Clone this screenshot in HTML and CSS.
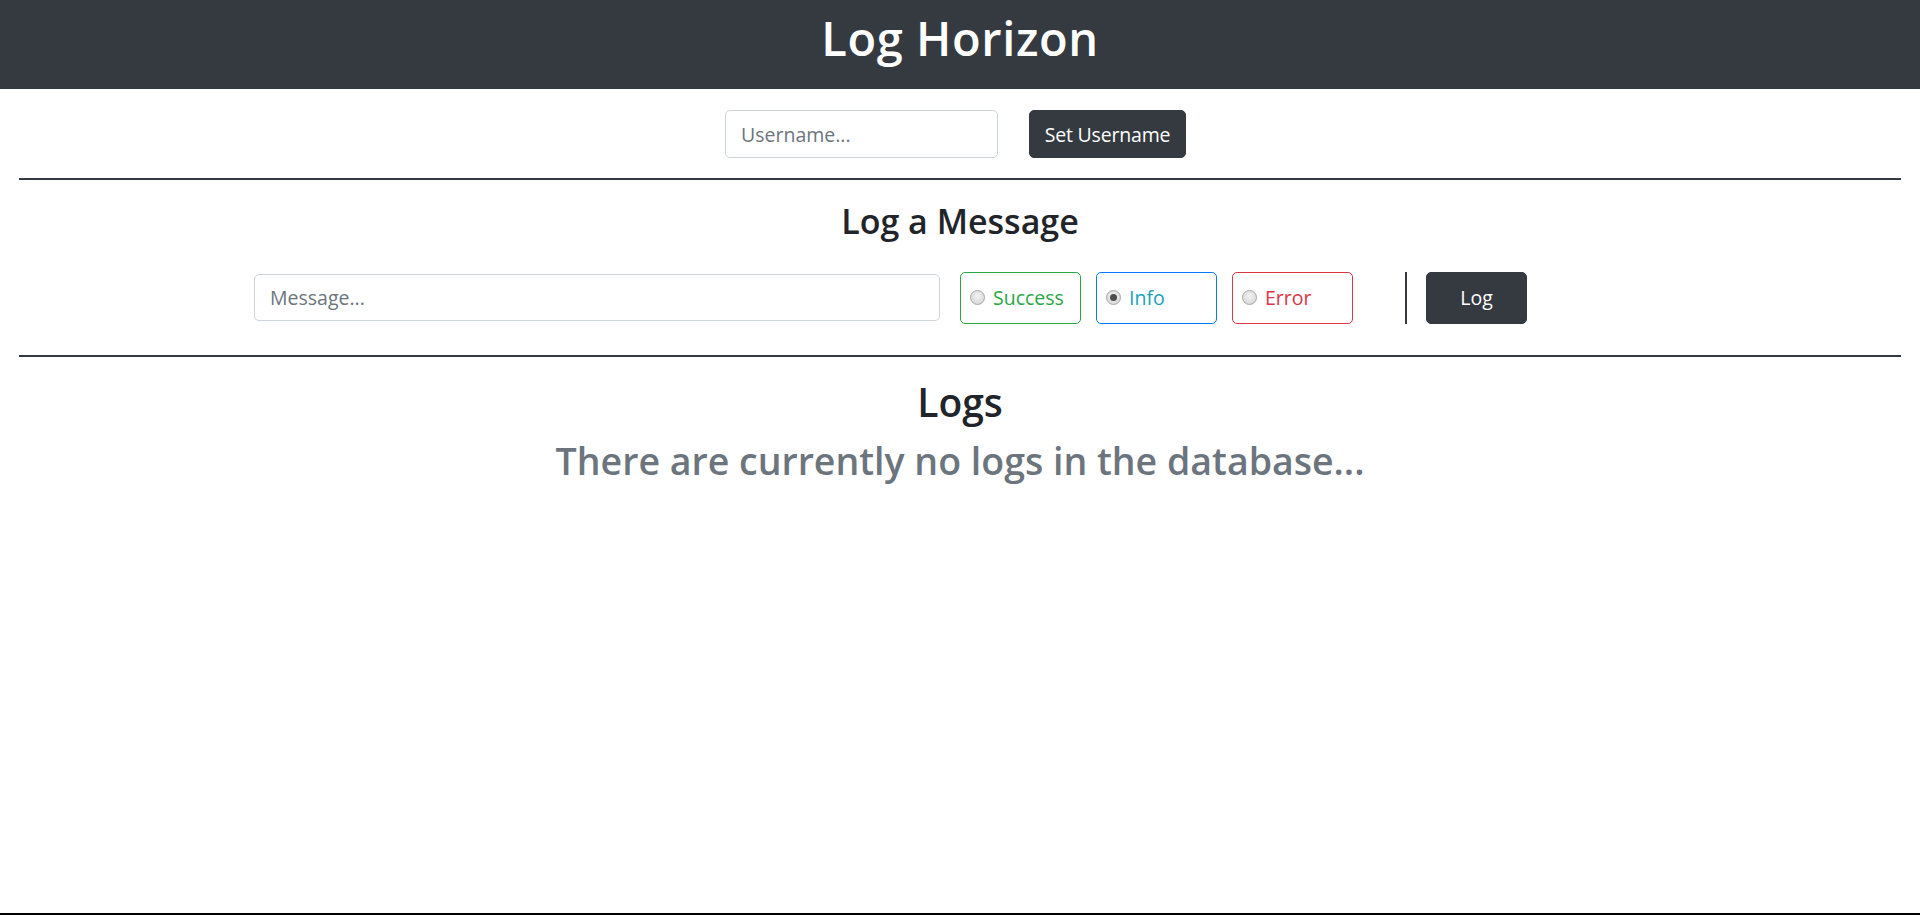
FILE: index.html
```html
<!DOCTYPE html>
<html lang="en">
<head>
<meta charset="utf-8">
<title>Log Horizon</title>
<link rel="stylesheet" href="styles.css">
</head>
<body>
<div class="page">
  <header class="topbar">
    <h1 class="brand">Log Horizon</h1>
  </header>

  <div class="user-row">
    <input class="field field-user" type="text" placeholder="Username...">
    <button class="btn btn-user" type="button">Set Username</button>
  </div>

  <hr class="rule">

  <section class="composer">
    <h3 class="section-title">Log a Message</h3>
    <div class="msg-row">
      <input class="field field-msg" type="text" placeholder="Message...">
      <label class="choice choice-success"><input class="radio" type="radio" name="level"><span>Success</span></label>
      <label class="choice choice-info"><input class="radio" type="radio" name="level" checked><span>Info</span></label>
      <label class="choice choice-error"><input class="radio" type="radio" name="level"><span>Error</span></label>
      <span class="vsep"></span>
      <button class="btn btn-log" type="button">Log</button>
    </div>
  </section>

  <hr class="rule rule-second">

  <section class="logs">
    <h2 class="logs-title">Logs</h2>
    <h1 class="empty">There are currently no logs in the database...</h1>
  </section>
</div>
</body>
</html>
```

FILE: styles.css
```css
* {
  box-sizing: border-box;
}

html, body {
  margin: 0;
  padding: 0;
}

body {
  font-family: "Open Sans", "Noto Sans", "Liberation Sans", sans-serif;
  color: #212529;
  background: #fff;
}

.page {
  min-height: 100vh;
  border-bottom: 2px solid #000;
  display: flex;
  flex-direction: column;
}

.topbar {
  height: 89px;
  background: #343a40;
  padding-top: 10px;
}

.brand {
  margin: 0;
  color: #fff;
  text-align: center;
  font-size: 47px;
  line-height: 1.2;
  font-weight: 600;
  letter-spacing: 0.6px;
}

.user-row {
  display: flex;
  justify-content: center;
  align-items: center;
  gap: 31px;
  margin-top: 21px;
  padding-right: 9px;
}

.field {
  height: 48px;
  border: 1px solid #ced4da;
  border-radius: 5px;
  padding: 0 15px;
  font-family: inherit;
  font-size: 19.5px;
  color: #495057;
  background: #fff;
  outline: none;
}

.field::placeholder {
  color: #6c757d;
}

.field-user {
  width: 273px;
}

.field-msg {
  width: 686px;
  height: 47px;
}

.btn {
  height: 48px;
  border: 1px solid #343a40;
  border-radius: 5px;
  background: #343a40;
  color: #fff;
  font-family: inherit;
  font-size: 19.5px;
  padding: 0;
  white-space: nowrap;
  cursor: pointer;
}

.btn-user {
  width: 157px;
  letter-spacing: -0.2px;
}

.rule {
  margin: 20px 19px 0;
  border: 0;
  border-top: 2px solid #343a40;
  height: 0;
}

.rule-second {
  margin-top: 31px;
}

.composer {
  display: flex;
  flex-direction: column;
}

.section-title {
  margin: 21px 0 0;
  text-align: center;
  font-size: 34px;
  line-height: 1.2;
  font-weight: 600;
  color: #212529;
}

.msg-row {
  display: flex;
  justify-content: center;
  align-items: center;
  margin-top: 30px;
  height: 52px;
  padding-right: 139px;
}

.choice {
  width: 121px;
  height: 52px;
  border: 1px solid;
  border-radius: 5px;
  display: flex;
  align-items: center;
  padding-left: 9px;
  gap: 8px;
  font-size: 19.5px;
  cursor: pointer;
}

.field-msg + .choice {
  margin-left: 20px;
}

.choice + .choice {
  margin-left: 15px;
}

.choice-success {
  border-color: #28a745;
  color: #28a745;
}

.choice-info {
  border-color: #007bff;
  color: #17a2b8;
}

.choice-error {
  border-color: #dc3545;
  color: #dc3545;
}

.radio {
  -webkit-appearance: none;
  appearance: none;
  margin: 0;
  width: 15px;
  height: 15px;
  flex: none;
  border-radius: 50%;
  border: 1px solid #a6a6a6;
  background: radial-gradient(circle at 50% 40%, #f2f2f2 0%, #dcdcdc 70%, #d0d0d0 100%);
  position: relative;
}

.radio:checked::after {
  content: "";
  position: absolute;
  left: 3px;
  top: 3px;
  width: 7px;
  height: 7px;
  border-radius: 50%;
  background: #4d4d4d;
}

.vsep {
  width: 2px;
  height: 52px;
  background: #343a40;
  margin-left: 52px;
  margin-right: 19px;
}

.btn-log {
  width: 101px;
  height: 52px;
}

.logs {
  display: flex;
  flex-direction: column;
  align-items: center;
}

.logs-title {
  margin: 22px 0 0;
  font-size: 39px;
  line-height: 1.2;
  font-weight: 600;
  color: #212529;
}

.empty {
  margin: 12px 0 0;
  font-size: 37.5px;
  line-height: 1.2;
  font-weight: 600;
  color: #6c757d;
}
```
